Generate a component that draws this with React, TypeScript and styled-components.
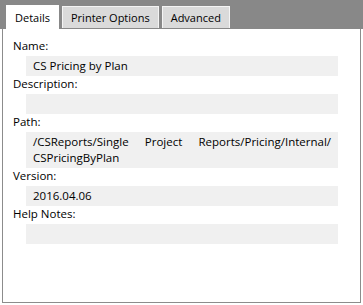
import React from "react";
import styled, { createGlobalStyle } from "styled-components";

const Global = createGlobalStyle`
  html, body { margin: 0; padding: 0; background: #ffffff; }
  body { font-family: "Open Sans", "Noto Sans", sans-serif; }
`;

const Frame = styled.div`
  width: 363px;
  height: 305px;
  display: flex;
  flex-direction: column;
  background: #ffffff;
  overflow: hidden;
`;

const TabStrip = styled.div`
  height: 29px;
  flex: 0 0 29px;
  background: #888888;
  display: flex;
  align-items: flex-end;
  gap: 3px;
  padding-left: 6px;
  box-sizing: border-box;
`;

const Tab = styled.div<{ $active?: boolean }>`
  box-sizing: border-box;
  height: ${(p) => (p.$active ? "24px" : "22px")};
  margin-bottom: ${(p) => (p.$active ? "0" : "1px")};
  padding: 0 ${(p) => (p.$active ? "9px" : "8px")};
  display: flex;
  align-items: center;
  font-size: 11px;
  color: #000;
  background: ${(p) => (p.$active ? "#ffffff" : "#dadada")};
  border: ${(p) => (p.$active ? "none" : "1px solid #f4f4f4")};
  border-bottom: none;
  white-space: nowrap;
`;

const Panel = styled.div`
  flex: 1;
  margin: 0 2px 2px 2px;
  border: 1px solid #8c8c8c;
  border-top: none;
  background: #ffffff;
  padding: 9px 22px 0 10px;
  display: flex;
  flex-direction: column;
`;

const Label = styled.div`
  font-size: 11.5px;
  line-height: 16px;
  margin-bottom: 2px;
  color: #000;
`;

const Field = styled.div<{ $multi?: boolean }>`
  box-sizing: border-box;
  margin-left: 13px;
  min-height: ${(p) => (p.$multi ? "36px" : "20px")};
  background: #f0f0f0;
  padding: ${(p) => (p.$multi ? "2px 7px" : "0 7px")};
  font-size: 11.5px;
  line-height: ${(p) => (p.$multi ? "16px" : "20px")};
  color: #000;
  text-align: justify;
`;

const Row = styled.div`
  display: flex;
  flex-direction: column;
`;

const fields: { label: string; value: string; multi?: boolean }[] = [
  { label: "Name:", value: "CS Pricing by Plan" },
  { label: "Description:", value: "" },
  {
    label: "Path:",
    value: "/CSReports/Single Project Reports/Pricing/Internal/ CSPricingByPlan",
    multi: true,
  },
  { label: "Version:", value: "2016.04.06" },
  { label: "Help Notes:", value: "" },
];

export default function App() {
  return (
    <Frame>
      <Global />
      <TabStrip>
        <Tab $active>Details</Tab>
        <Tab>Printer Options</Tab>
        <Tab>Advanced</Tab>
      </TabStrip>
      <Panel>
        {fields.map((f) => (
          <Row key={f.label}>
            <Label>{f.label}</Label>
            <Field $multi={f.multi}>{f.value}</Field>
          </Row>
        ))}
      </Panel>
    </Frame>
  );
}
